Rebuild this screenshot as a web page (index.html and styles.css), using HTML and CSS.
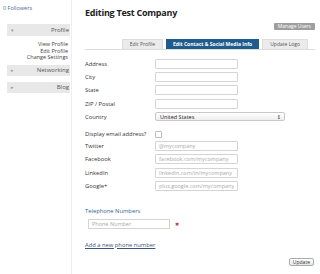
FILE: index.html
```html
<!DOCTYPE html>
<html lang="en">
<head>
  <meta charset="UTF-8" />
  <title>Editing Test Company</title>
  <link rel="stylesheet" href="styles.css">
</head>
<body>
  <div class="page">
    <aside class="sidebar">
      <div class="followers">0 Followers</div>

      <div class="nav-head open"><span class="arrow">&#9662;</span>Profile</div>
      <ul class="nav-links">
        <li>View Profile</li>
        <li>Edit Profile</li>
        <li>Change Settings</li>
      </ul>
      <div class="nav-head"><span class="arrow">&#9656;</span>Networking</div>
      <div class="nav-head"><span class="arrow">&#9656;</span>Blog</div>
    </aside>

    <main class="content">
      <h1>Editing Test Company</h1>
      <div class="actions">
        <button class="btn-gray">Manage Users</button>
      </div>

      <div class="tabs">
        <span class="tab">Edit Profile</span>
        <span class="tab active">Edit Contact &amp; Social Media Info</span>
        <span class="tab">Update Logo</span>
      </div>

      <form class="form">
        <div class="row"><label>Address</label><input type="text"></div>
        <div class="row"><label>City</label><input type="text"></div>
        <div class="row"><label>State</label><input type="text"></div>
        <div class="row"><label>ZIP / Postal</label><input type="text"></div>
        <div class="row"><label>Country</label>
          <div class="select"><span>United States</span><span class="updown">&#8597;</span></div>
        </div>

        <div class="row check-row"><label>Display email address?</label><span class="checkbox"></span></div>
        <div class="row"><label>Twitter</label><input type="text" placeholder="@mycompany"></div>
        <div class="row"><label>Facebook</label><input type="text" placeholder="facebook.com/mycompany"></div>
        <div class="row"><label>LinkedIn</label><input type="text" placeholder="linkedin.com/in/mycompany"></div>
        <div class="row"><label>Google+</label><input type="text" placeholder="plus.google.com/mycompany"></div>

        <div class="phones-title">Telephone Numbers</div>
        <div class="phone-row">
          <input type="text" class="phone" placeholder="Phone Number">
          <span class="remove">&#10006;</span>
        </div>
        <a class="add-link" href="#">Add a new phone number</a>

        <div class="submit-row">
          <button type="button" class="btn-light">Update</button>
        </div>
      </form>
    </main>
  </div>
</body>
</html>
```

FILE: styles.css
```css
body {
  margin: 0;
  font-family: 'Open Sans', 'DejaVu Sans', sans-serif;
  color: #333;
  background: #fff;
}

.page {
  display: flex;
  min-height: 274px;
}

.sidebar {
  width: 67px;
  padding: 5px 1px 0 3px;
  border-right: 1px solid #eee;
  font-size: 5.5px;
}

.followers {
  color: #4a6a96;
  height: 6px;
  line-height: 6px;
  margin-bottom: 13px;
}

.nav-head {
  display: flex;
  align-items: center;
  justify-content: flex-end;
  position: relative;
  margin-left: 4px;
  background: #e8e8e8;
  color: #555;
  font-size: 6px;
  height: 11px;
  padding-right: 1px;
  margin-bottom: 6px;
}

.nav-head.open {
  height: 12px;
  margin-bottom: 5px;
}

.arrow {
  position: absolute;
  left: 4px;
  color: #999;
  font-size: 5px;
}

.nav-links {
  list-style: none;
  margin: 0 0 4px;
  padding: 0 2px 0 0;
  text-align: right;
  color: #444;
  line-height: 6.5px;
}

.content {
  flex: 1;
  padding: 0 5px 0 13px;
  font-size: 5.8px;
}

h1 {
  margin: 6px 0 0;
  font-size: 9px;
  line-height: 14px;
  font-weight: 700;
  letter-spacing: -0.25px;
  color: #222;
}

.actions {
  display: flex;
  justify-content: flex-end;
  margin-top: 3px;
}

.btn-gray {
  background: #9e9e9e;
  color: #fff;
  border: none;
  border-radius: 1px;
  font-family: inherit;
  font-size: 5px;
  height: 7px;
  padding: 0 4px;
  line-height: 7px;
}

.tabs {
  display: flex;
  justify-content: flex-end;
  gap: 3px;
  margin-top: 9px;
  padding-right: 7px;
  border-bottom: 1px solid #ddd;
}

.tab {
  background: #ebebeb;
  color: #555;
  font-size: 5px;
  height: 9px;
  line-height: 9px;
  padding: 0 7px;
  border: 1px solid #ddd;
  border-bottom: none;
}

.tab.active {
  background: #1f5b8c;
  color: #fff;
  font-weight: 700;
  padding: 0 6px;
  border-color: #1f5b8c;
}

.form {
  margin-top: 7px;
}

.row {
  display: flex;
  align-items: center;
  height: 13.3px;
}

.row label {
  width: 70px;
  flex-shrink: 0;
  color: #333;
}

.row input {
  box-sizing: border-box;
  width: 83px;
  height: 10px;
  border: 1px solid #d4d4d4;
  border-radius: 1px;
  padding: 0 3px;
  font-family: inherit;
  font-size: 5.5px;
  color: #333;
}

input::placeholder {
  color: #aaa;
}

.select {
  box-sizing: border-box;
  width: 130px;
  height: 9px;
  border: 1px solid #c8c8c8;
  border-radius: 2px;
  background: linear-gradient(#fff, #eee);
  display: flex;
  justify-content: space-between;
  align-items: center;
  padding: 0 3px 0 4px;
  font-size: 5.5px;
  color: #222;
}

.updown {
  font-size: 5px;
}

.check-row {
  margin-top: 6px;
  height: 10px;
}

.checkbox {
  width: 5px;
  height: 5px;
  border: 1px solid #bbb;
  border-radius: 1px;
}

.phones-title {
  color: #2a6496;
  margin-top: 14px;
  line-height: 8px;
}

.phone-row {
  display: flex;
  align-items: center;
  gap: 5px;
  margin-top: 4px;
  padding-left: 3px;
}

.phone {
  box-sizing: border-box;
  width: 82px;
  height: 10px;
  border: 1px solid #d4d4d4;
  padding: 0 3px;
  font-family: inherit;
  font-size: 5.5px;
}

.remove {
  color: #c0392b;
  font-size: 5px;
}

.add-link {
  display: block;
  margin-top: 12px;
  color: #3b5577;
  text-decoration: underline;
  line-height: 8px;
}

.submit-row {
  display: flex;
  justify-content: flex-end;
  margin-top: 9px;
  padding-right: 1px;
}

.btn-light {
  background: linear-gradient(#fff, #e8e8e8);
  border: 1px solid #aaa;
  border-radius: 2px;
  font-family: inherit;
  font-size: 5px;
  height: 8px;
  line-height: 6px;
  padding: 0 3px;
  color: #333;
}
```
